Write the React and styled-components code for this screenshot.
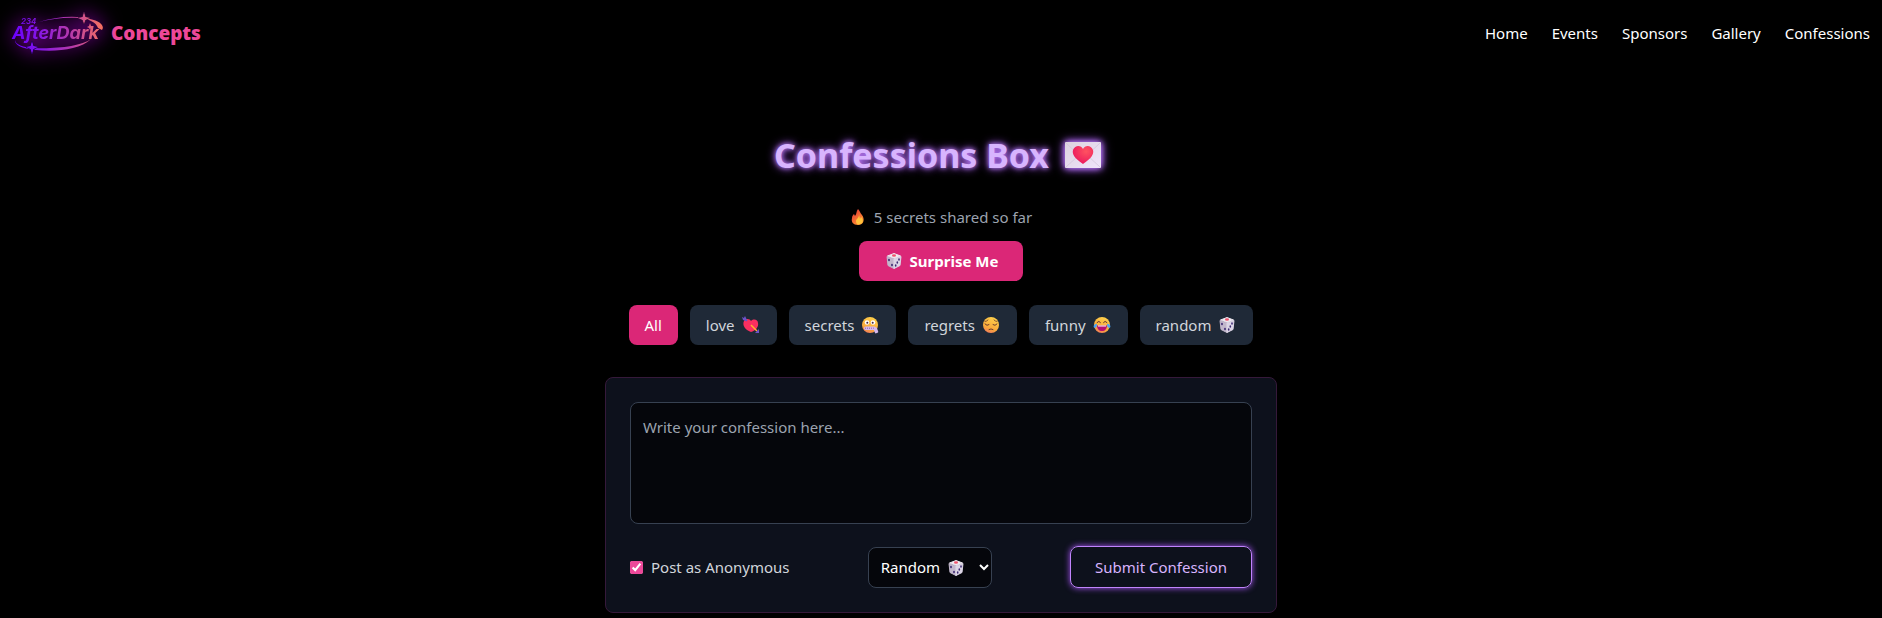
import React, { useState } from "react";
import styled, { createGlobalStyle } from "styled-components";

const GlobalStyle = createGlobalStyle`
  * {
    box-sizing: border-box;
  }

  body {
    margin: 0;
    background: #000;
    color: #fff;
    font-family: "Noto Sans", "Open Sans", sans-serif;
    font-size: 15px;
    line-height: 24px;
  }

  button, select, textarea {
    font: inherit;
  }
`;

const Header = styled.header`
  display: flex;
  align-items: center;
  justify-content: space-between;
  padding: 8px 12px;
`;

const Brand = styled.a`
  display: flex;
  align-items: center;
  gap: 7px;
  color: #ec4899;
  font-size: 19px;
  font-weight: 900;
  text-decoration: none;
`;

const LogoArt = styled.svg`
  width: 92px;
  height: 50px;
  overflow: visible;
  filter: drop-shadow(0 0 10px #c800ff);
`;

const Nav = styled.nav`
  display: flex;
  gap: 24px;
`;

const NavLink = styled.a`
  color: #fff;
  text-decoration: none;
`;

const Main = styled.main`
  display: flex;
  flex-direction: column;
  align-items: center;
  padding: 69px 24px 5px;
`;

const Title = styled.h1`
  display: flex;
  align-items: center;
  gap: 15px;
  margin: 0 0 30px;
  color: #d8b4fe;
  font-size: 34px;
  font-weight: 700;
  line-height: 40px;
  text-shadow: 0 0 5px #c084fc, 0 0 10px #a855f7;

  svg {
    filter: drop-shadow(0 0 3px #c084fc) drop-shadow(0 0 4px #a855f7);
  }
`;

const Count = styled.p`
  display: flex;
  align-items: center;
  gap: 8px;
  margin: 0 0 12px;
  color: #9ca3af;
`;

const SurpriseButton = styled.button`
  display: flex;
  align-items: center;
  gap: 6px;
  margin-bottom: 24px;
  padding: 8px 25px;
  border: 0;
  border-radius: 8px;
  background: #db2777;
  color: #fff;
  font-weight: 700;
  cursor: pointer;
`;

const Filters = styled.div`
  display: flex;
  flex-wrap: wrap;
  justify-content: center;
  gap: 12px;
  margin-bottom: 32px;
`;

const FilterButton = styled.button`
  display: flex;
  align-items: center;
  gap: 6px;
  padding: 8px 16px;
  border: 0;
  border-radius: 8px;
  background: ${({ $active }) => ($active ? "#db2777" : "#1f2937")};
  color: ${({ $active }) => ($active ? "#fff" : "#d1d5db")};
  cursor: pointer;
`;

const Form = styled.form`
  width: 100%;
  max-width: 672px;
  padding: 24px;
  border: 1px solid #35193a;
  border-radius: 8px;
  background: #0d111c;
`;

const Message = styled.textarea`
  display: block;
  width: 100%;
  height: 122px;
  margin-bottom: 22px;
  padding: 12px;
  border: 1px solid #374151;
  border-radius: 8px;
  background: #05060b;
  color: #fff;
  resize: none;

  &::placeholder {
    color: #9ca3af;
  }
`;

const FormRow = styled.div`
  display: flex;
  flex-wrap: wrap;
  align-items: center;
  justify-content: space-between;
  gap: 12px;
`;

const CheckLabel = styled.label`
  display: flex;
  align-items: center;
  gap: 8px;
  color: #d1d5db;

  input {
    width: 13px;
    height: 13px;
    margin: 0;
    accent-color: #ec4899;
  }
`;

const SelectBox = styled.div`
  position: relative;
  width: 124px;

  svg {
    position: absolute;
    top: 12px;
    pointer-events: none;
  }

  svg:nth-of-type(1) {
    right: 26px;
  }

  svg:nth-of-type(2) {
    right: 3px;
  }
`;

const Select = styled.select`
  display: block;
  width: 100%;
  height: 41px;
  padding: 0 12px;
  border: 1px solid #374151;
  border-radius: 8px;
  background: #05060b;
  color: #fff;
  appearance: none;
`;

const SubmitButton = styled.button`
  padding: 8px 24px;
  border: 1px solid #c084fc;
  border-radius: 8px;
  background: transparent;
  color: #d8b4fe;
  box-shadow: 0 0 6px #a855f7;
  cursor: pointer;
`;

function Logo() {
  return (
    <LogoArt viewBox="0 0 92 50" role="img" aria-label="234 AfterDark">
      <defs>
        <linearGradient id="dusk" gradientUnits="userSpaceOnUse" x1="0" y1="30" x2="92" y2="20">
          <stop offset="0" stopColor="#6a00ff" />
          <stop offset="0.3" stopColor="#8617e6" />
          <stop offset="0.65" stopColor="#b83ba8" />
          <stop offset="1" stopColor="#f9745c" />
        </linearGradient>
      </defs>
      <g fill="url(#dusk)">
        <path d="M27 14 C43 9 63 7 78 11 C88 13 93 18 90 22 L86 20 C84 14 77 11 67 10 C53 9 39 11 27 14 Z" />
        <path d="M3 32 C3 36 11 40 23 40 C44 41 70 38 79 31 C68 42 43 44 24 42 C9 41 2 36 3 32 Z" />
        <path d="M72 4 L74 9 L78 10 L74 12 L72 16 L70 12 L66 10 L70 9 Z" stroke="#2a0a30" strokeWidth="1" />
        <path d="M72 4 L73 9 L78 10 L73 12 L72 16 L71 12 L66 10 L71 9 Z" />
        <path d="M20 33 L22 38 L26 39 L22 41 L20 46 L18 41 L14 39 L18 38 Z" stroke="#1a0040" strokeWidth="1" />
        <path d="M20 33 L21 38 L26 39 L21 41 L20 46 L19 41 L14 39 L19 38 Z" />
        <path d="M78 15 L79 18 L81 19 L79 20 L78 22 L77 20 L75 19 L77 18 Z" />
        <text x="9" y="16" fontFamily="Inter, sans-serif" fontSize="8" fontStyle="italic" fontWeight="600">234</text>
        <text x="0" y="31" fontFamily="Inter, sans-serif" fontSize="18" fontStyle="italic" fontWeight="700">AfterDark</text>
      </g>
    </LogoArt>
  );
}

function LoveLetter() {
  return (
    <svg width="44" height="38" viewBox="0 0 44 38" aria-hidden="true">
      <defs>
        <linearGradient id="paper" x1="0" y1="0" x2="1" y2="1">
          <stop offset="0" stopColor="#ddd2df" />
          <stop offset="1" stopColor="#efe5fb" />
        </linearGradient>
        <radialGradient id="seal" cx="0.65" cy="0.3" r="0.8">
          <stop offset="0" stopColor="#ff5260" />
          <stop offset="1" stopColor="#e9135e" />
        </radialGradient>
      </defs>
      <rect x="1" y="6" width="36" height="26" rx="1" fill="url(#paper)" />
      <path d="M2 31 L14 20 M36 31 L24 20 M2 7 L19 23 L36 7" fill="none" stroke="#d3c6da" strokeWidth="0.8" />
      <path d="M19 28 C10 22 8 18 9 14 C11 9 17 9 19 13 C21 9 27 9 29 14 C30 18 28 22 19 28 Z" fill="url(#seal)" />
    </svg>
  );
}

function Fire() {
  return (
    <svg width="16" height="18" viewBox="0 0 16 18" aria-hidden="true">
      <defs>
        <linearGradient id="flame" x1="0" y1="0" x2="0.7" y2="1">
          <stop offset="0.2" stopColor="#e94235" />
          <stop offset="1" stopColor="#ff9a32" />
        </linearGradient>
      </defs>
      <path d="M8 1 C10 3 10 5 12 7 C15 11 14 17 8 17 C3 17 1 14 2 10 C2 8 3 7 4 6 L5 8 C7 6 6 3 8 1 Z" fill="url(#flame)" />
      <path d="M9 7 C9 10 6 11 6 13 C6 16 8 17 10 16 C14 15 13 11 11 9 L10 11 Z" fill="#ffc23b" />
    </svg>
  );
}

function Dice() {
  return (
    <svg width="20" height="18" viewBox="-1 0 20 18" aria-hidden="true">
      <path d="M9 1.5 L15.5 4 L9 6.5 L2.5 4 Z" fill="#eee9f1" stroke="#eee9f1" strokeLinejoin="round" />
      <path d="M2 4.5 L9 7 V16.5 L3 13.5 Z" fill="#c2b7cc" stroke="#c2b7cc" strokeLinejoin="round" />
      <path d="M9 7 L16 4.5 L15 13.5 L9 16.5 Z" fill="#dcd5e6" stroke="#dcd5e6" strokeLinejoin="round" />
      <ellipse cx="9" cy="3.5" rx="2" ry="1.2" fill="#f0536c" />
      <g fill="#3d2a72">
        <ellipse cx="4" cy="8" rx="0.9" ry="1.3" />
        <ellipse cx="7" cy="13" rx="0.9" ry="1.3" />
        <ellipse cx="14" cy="7.5" rx="0.8" ry="1.3" />
        <ellipse cx="12.3" cy="10.5" rx="0.8" ry="1.3" />
        <ellipse cx="10.7" cy="13.5" rx="0.8" ry="1.3" />
      </g>
    </svg>
  );
}

function ArrowHeart() {
  return (
    <svg width="20" height="18" viewBox="-1 0 20 18" aria-hidden="true">
      <path d="M9 16 C3 14 0 9 2 5 C4 2 8 3 9 5 C12 2 16 4 16 7 C17 11 13 15 9 16 Z" fill="#f92f60" />
      <path d="M2 2 L5 5" stroke="#6b50c0" strokeWidth="1.5" />
      <path d="M9 9 L15 15" stroke="#ffb02e" strokeWidth="1.5" />
      <path d="M0 1 L2 2 L3 0 L5 4 L4 5 L1 4 Z M17 13 L17 17 L13 17 Z" fill="#6d53c8" />
    </svg>
  );
}

function FaceBase({ children }) {
  return (
    <svg width="20" height="18" viewBox="-1 0 20 18" aria-hidden="true">
      <defs>
        <linearGradient id="skin" x1="0.7" y1="0" x2="0.3" y2="1">
          <stop offset="0" stopColor="#ffd14a" />
          <stop offset="0.7" stopColor="#f9a83c" />
          <stop offset="1" stopColor="#f27b5b" />
        </linearGradient>
      </defs>
      <circle cx="9" cy="9" r="8" fill="url(#skin)" />
      {children}
    </svg>
  );
}

function ZipFace() {
  return (
    <FaceBase>
      <circle cx="6" cy="6.5" r="2.3" fill="#fff" />
      <circle cx="12" cy="6.5" r="2.3" fill="#fff" />
      <circle cx="6.3" cy="6.7" r="1" fill="#482641" />
      <circle cx="11.7" cy="6.7" r="1" fill="#482641" />
      <rect x="3" y="10.5" width="12" height="3.5" rx="1.7" fill="#d4b7ec" />
      <path d="M4 12.2 H14" stroke="#8b62a8" strokeDasharray="1 1" />
      <rect x="13" y="12" width="3.5" height="5.5" rx="1" fill="#d4b7ec" transform="rotate(-20 14 14)" />
    </FaceBase>
  );
}

function PensiveFace() {
  return (
    <FaceBase>
      <g fill="none" stroke="#6b3b2c" strokeLinecap="round">
        <path d="M3 5.5 Q5 5.3 6 4 M15 5.5 Q13 5.3 12 4" strokeWidth="0.8" />
        <path d="M3 8 Q5 10.5 7 8.7 M15 8 Q13 10.5 11 8.7 M7 13.5 Q9 12.2 11 13.5" />
      </g>
    </FaceBase>
  );
}

function JoyFace() {
  return (
    <FaceBase>
      <path d="M4 6.5 Q6 4 7.5 6.5 M10.5 6.5 Q12 4 14 6.5" fill="none" stroke="#5b2d32" strokeLinecap="round" />
      <path d="M4 9.5 H14 C14 13 12 15 9 15 C6 15 4 13 4 9.5 Z" fill="#b50f70" />
      <path d="M5 9.5 H13 V10.5 H5 Z" fill="#fff" />
      <path d="M4 8 C1 8 0 10 1 11.5 C3 12.5 4 10.5 4 8 Z M14 8 C17 8 18 10 17 11.5 C15 12.5 14 10.5 14 8 Z" fill="#4aa4f5" />
    </FaceBase>
  );
}

function Chevron() {
  return (
    <svg width="10" height="18" viewBox="0 0 10 18" aria-hidden="true">
      <path d="M1 6 L5 10 L9 6" fill="none" stroke="#fff" strokeWidth="2" />
    </svg>
  );
}

const links = ["Home", "Events", "Sponsors", "Gallery", "Confessions"];

const categories = [
  { name: "All" },
  { name: "love", Icon: ArrowHeart },
  { name: "secrets", Icon: ZipFace },
  { name: "regrets", Icon: PensiveFace },
  { name: "funny", Icon: JoyFace },
  { name: "random", Icon: Dice },
];

function App() {
  const [filter, setFilter] = useState("All");
  const [message, setMessage] = useState("");
  const [anonymous, setAnonymous] = useState(true);

  const handleSubmit = (e) => {
    e.preventDefault();
    setMessage("");
  };

  return (
    <>
      <GlobalStyle />
      <Header>
        <Brand href="#home">
          <Logo />
          Concepts
        </Brand>
        <Nav>
          {links.map((link) => (
            <NavLink key={link} href={`#${link.toLowerCase()}`}>{link}</NavLink>
          ))}
        </Nav>
      </Header>
      <Main>
        <Title>
          Confessions Box <LoveLetter />
        </Title>
        <Count>
          <Fire /> 5 secrets shared so far
        </Count>
        <SurpriseButton type="button">
          <Dice /> Surprise Me
        </SurpriseButton>
        <Filters>
          {categories.map(({ name, Icon }) => (
            <FilterButton
              key={name}
              type="button"
              $active={filter === name}
              onClick={() => setFilter(name)}
            >
              {name}
              {Icon && <Icon />}
            </FilterButton>
          ))}
        </Filters>
        <Form onSubmit={handleSubmit}>
          <Message
            aria-label="Confession"
            placeholder="Write your confession here..."
            value={message}
            onChange={(e) => setMessage(e.target.value)}
          />
          <FormRow>
            <CheckLabel>
              <input
                type="checkbox"
                checked={anonymous}
                onChange={(e) => setAnonymous(e.target.checked)}
              />
              Post as Anonymous
            </CheckLabel>
            <SelectBox>
              <Select aria-label="Category" defaultValue="random">
                <option value="random">Random</option>
              </Select>
              <Dice />
              <Chevron />
            </SelectBox>
            <SubmitButton type="submit">Submit Confession</SubmitButton>
          </FormRow>
        </Form>
      </Main>
    </>
  );
}

export default App;
